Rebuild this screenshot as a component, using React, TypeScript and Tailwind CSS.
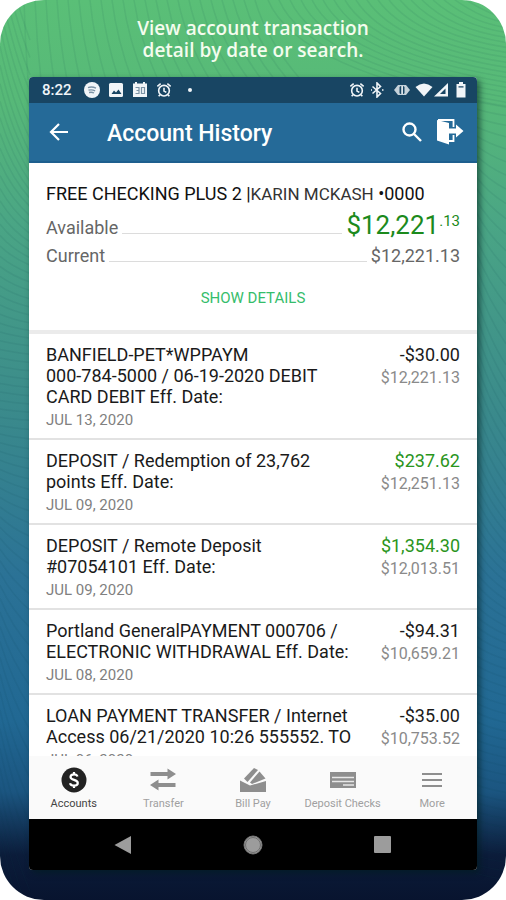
import type { ReactNode } from "react";

type Transaction = {
  lines: string[];
  date: string;
  amount: string;
  balance: string;
  credit?: boolean;
};

const transactions: Transaction[] = [
  {
    lines: ["BANFIELD-PET*WPPAYM", "000-784-5000 / 06-19-2020 DEBIT", "CARD DEBIT Eff. Date:"],
    date: "JUL 13, 2020",
    amount: "-$30.00",
    balance: "$12,221.13",
  },
  {
    lines: ["DEPOSIT / Redemption of 23,762", "points Eff. Date:"],
    date: "JUL 09, 2020",
    amount: "$237.62",
    balance: "$12,251.13",
    credit: true,
  },
  {
    lines: ["DEPOSIT / Remote Deposit", "#07054101 Eff. Date:"],
    date: "JUL 09, 2020",
    amount: "$1,354.30",
    balance: "$12,013.51",
    credit: true,
  },
  {
    lines: ["Portland GeneralPAYMENT 000706 /", "ELECTRONIC WITHDRAWAL Eff. Date:"],
    date: "JUL 08, 2020",
    amount: "-$94.31",
    balance: "$10,659.21",
  },
  {
    lines: ["LOAN PAYMENT TRANSFER / Internet", "Access 06/21/2020 10:26 555552. TO"],
    date: "JUL 06, 2020",
    amount: "-$35.00",
    balance: "$10,753.52",
  },
];

// [y, drop] stops: how far a wave falls while it crosses the side margin
const leftStops = [[-80, 120], [60, 90], [160, 45], [250, 18], [340, 5], [420, 3], [500, 14], [580, 40], [700, 90], [900, 120]];
const rightStops = [[70, 3], [120, 8], [200, 35], [300, 70], [440, 60], [560, 30], [640, 14], [760, 8], [900, 6]];

function dropAt(stops: number[][], y: number) {
  for (let i = 1; i < stops.length; i++) {
    const [y0, d0] = stops[i - 1];
    const [y1, d1] = stops[i];
    if (y <= y1) return d0 + ((d1 - d0) * (y - y0)) / (y1 - y0);
  }
  return stops[stops.length - 1][1];
}

function sideWaves(stops: number[][], x: number, from: number) {
  const paths: string[] = [];
  let y = from;
  while (y < 880) {
    const d = dropAt(stops, y);
    paths.push(`M${x} ${y}Q${x + 12} ${y + d * 0.6} ${x + 30} ${y + d}`);
    y += 8 + d * 0.12;
  }
  return paths.join("");
}

function topWaves() {
  const paths: string[] = [];
  for (let i = 0; i < 22; i++) {
    const x = 24 + i * 11;
    paths.push(`M${x} 0Q${x + 1 + i / 2} 40 ${x + 4 + i * 2} 80`);
  }
  for (let i = 0; i < 22; i++) {
    const x = 268 + i * 11;
    paths.push(`M${x} 0Q${x + 30} ${72 - i * 3} 510 ${108 - i * 5}`);
  }
  return paths.join("");
}

function Waves() {
  return (
    <svg
      aria-hidden="true"
      viewBox="0 0 506 900"
      preserveAspectRatio="none"
      className="absolute inset-0 h-full w-full"
      fill="none"
      stroke="#0b3a4a"
      strokeOpacity="0.08"
      strokeWidth="1.5"
    >
      <path d={sideWaves(leftStops, 0, -80)} />
      <path d={sideWaves(rightStops, 476, 100)} />
      <path d={topWaves()} />
    </svg>
  );
}

function AlarmIcon() {
  return (
    <svg viewBox="0 0 24 24" className="h-4 w-4" fill="none" stroke="currentColor" strokeWidth="2.4">
      <circle cx="12" cy="13" r="8" />
      <path d="M12 8.500v5l3.500 2M2 6.500l5-4M22 6.500l-5-4M6 19l-2 2.500M18 19l2 2.500" />
    </svg>
  );
}

function StatusBar() {
  return (
    <div className="flex h-[26px] shrink-0 items-center justify-between bg-[#184563] pr-2 pl-[13px] text-[#f1f5f8]">
      <div className="flex items-center gap-2">
        <span className="mr-1 text-[15px] leading-5 font-medium">8:22</span>
        <svg viewBox="0 0 16 16" className="h-4 w-4">
          <circle cx="8" cy="8" r="8" fill="currentColor" />
          <path d="M4 5.600q4-1.400 8 .6M4.500 8.200q3.500-1 6.600.6M5 10.500q3-.7 5 .5" fill="none" stroke="#7c93a5" strokeWidth="1.300" />
        </svg>
        <svg viewBox="0 0 16 16" className="h-4 w-4">
          <rect x="1" y="1" width="14" height="14" rx="1.500" fill="currentColor" />
          <path d="M3.500 12l2.500-3.500 2 2 2.500-3 3 4.500z" fill="#184563" />
        </svg>
        <svg viewBox="0 0 16 16" className="h-4 w-4">
          <path d="M1 1.500h2V0h2v1.500h6V0h2v1.500h2V15H1z" fill="currentColor" />
          <path d="M3.500 5.500h3.500v6H3.500M4.500 8.500h2.500M9.500 5.500h3v6h-3z" fill="none" stroke="#7c93a5" strokeWidth="1.200" />
        </svg>
        <AlarmIcon />
        <span className="ml-2 h-1 w-1 rounded-full bg-current" />
      </div>
      <div className="flex items-center gap-1">
        <AlarmIcon />
        <svg viewBox="0 0 16 16" className="mr-1 h-4 w-4" fill="none" stroke="currentColor" strokeWidth="1.600">
          <path d="M3.500 4.500l8 7L8 15V1l3.500 3.500-8 7M2 8h1M13 8h1.500" />
        </svg>
        <svg viewBox="0 0 18 16" className="h-4 w-[18px]">
          <path d="M5 3h8l4 5-4 5H5L1 8z" fill="currentColor" opacity=".8" />
          <rect x="6.500" y="4" width="5" height="8" rx="1.500" fill="#184563" />
          <rect x="8.300" y="4" width="1.600" height="8" fill="currentColor" />
        </svg>
        <div className="flex items-center">
          <svg viewBox="0 0 18 16" className="h-4 w-[18px]">
            <path d="M.5 5Q9-2 17.500 5L9 14.500z" fill="currentColor" />
          </svg>
          <svg viewBox="0 0 16 16" className="h-4 w-4">
            <path d="M15 1v13.500H1z" fill="currentColor" />
            <path d="M12.500 6.500v5.500H7z" fill="#184563" />
          </svg>
        </div>
        <svg viewBox="0 0 16 16" className="h-4 w-4">
          <path d="M6 0h4v2h2.500v13.500h-9V2H6z" fill="currentColor" />
          <path d="M5.500 4.200h5V5.500h-5z" fill="#184563" />
        </svg>
      </div>
    </div>
  );
}

function AppBar() {
  return (
    <header className="flex h-[60px] shrink-0 items-center border-b-2 border-[#1d5f8e] bg-[#256a98] pr-[13px] pl-[18px] text-white">
      <button type="button" aria-label="Back">
        <svg viewBox="0 0 24 24" className="h-6 w-6" fill="none" stroke="currentColor" strokeWidth="2.200">
          <path d="M21 12H4.500M12 4l-8 8 8 8" />
        </svg>
      </button>
      <h1 className="ml-9 flex-1 pt-1 text-[23px] leading-8 font-medium">Account History</h1>
      <button type="button" aria-label="Search">
        <svg viewBox="0 0 24 24" className="h-6 w-6" fill="none" stroke="currentColor" strokeWidth="2.400">
          <circle cx="9.500" cy="9.500" r="6" />
          <path d="M14 14l7 7" />
        </svg>
      </button>
      <button type="button" aria-label="Log out" className="ml-3">
        <svg viewBox="0 0 28 28" className="h-7 w-7">
          <path d="M1 2l12 3v21.500L1 22.500z" fill="currentColor" />
          <path d="M2 2h15.500v7M17.500 17v6H13" fill="none" stroke="currentColor" strokeWidth="1.800" />
          <path d="M13 10.500h7V6.500l7.500 6.500-7.500 6.500v-4h-7z" fill="currentColor" />
          <path d="M13 9.500h4M13 16.500h4" stroke="#256a98" strokeWidth="1.200" />
        </svg>
      </button>
    </header>
  );
}

function BalanceRow({ label, children }: { label: string; children: ReactNode }) {
  return (
    <div className="flex items-baseline gap-1 text-lg leading-7 text-[#666]">
      <dt>{label}</dt>
      <span className="flex-1 border-b border-[#dcdcdc]" />
      <dd>{children}</dd>
    </div>
  );
}

function AccountSummary() {
  return (
    <section className="shrink-0 border-b-4 border-[#ebebeb] px-[17px] pt-5 pb-5">
      <h2 className="text-lg leading-[22px] whitespace-nowrap text-[#111]">
        FREE CHECKING PLUS 2 |<span className="text-[17px] text-[#333]">KARIN MCKASH</span> •0000
      </h2>
      <dl className="mt-[6px]">
        <BalanceRow label="Available">
          <span className="flex items-start text-[26px] text-[#1c8a1c]">
            $12,221<span className="text-[15px] leading-5">.13</span>
          </span>
        </BalanceRow>
        <BalanceRow label="Current">$12,221.13</BalanceRow>
      </dl>
      <div className="mt-4 flex justify-center">
        <button type="button" className="text-[15px] leading-6 text-[#35bd6b]">
          SHOW DETAILS
        </button>
      </div>
    </section>
  );
}

function TransactionRow({ item }: { item: Transaction }) {
  return (
    <li className="flex justify-between border-b-2 border-[#e2e2e2] px-[17px] pt-[10px] pb-2">
      <div className="whitespace-nowrap">
        {item.lines.map((line) => (
          <p key={line} className="text-lg leading-[21px] text-[#1a1a1a]">
            {line}
          </p>
        ))}
        <p className="mt-[3px] text-[15px] leading-5 text-[#808080]">{item.date}</p>
      </div>
      <div className="text-right">
        <p className={item.credit ? "text-lg leading-[21px] text-[#2a951c]" : "text-lg leading-[21px] text-[#1a1a1a]"}>
          {item.amount}
        </p>
        <p className="mt-[3px] text-base leading-5 text-[#8a8a8a]">{item.balance}</p>
      </div>
    </li>
  );
}

function Tab({ label, active, children }: { label: string; active?: boolean; children: ReactNode }) {
  return (
    <button
      type="button"
      className={
        active
          ? "flex flex-col items-center gap-1 pt-[10px] text-[#222]"
          : "flex flex-col items-center gap-1 pt-[10px] text-[#8e8e8e]"
      }
    >
      <svg viewBox="0 0 28 28" className="h-7 w-7">
        {children}
      </svg>
      <span className={active ? "text-[11px] leading-3 whitespace-nowrap text-[#444]" : "text-[11px] leading-3 whitespace-nowrap text-[#a0a0a0]"}>
        {label}
      </span>
    </button>
  );
}

function TabBar() {
  return (
    <nav className="grid h-[63px] shrink-0 grid-cols-5 bg-[#fafafa]">
      <Tab label="Accounts" active>
        <circle cx="14" cy="14" r="12.500" fill="currentColor" />
        <path d="M17.500 10.500c-.5-1.500-1.800-2.200-3.500-2.200-2 0-3.500 1-3.500 2.700 0 3.800 7.300 2 7.300 6 0 1.700-1.600 2.700-3.800 2.700-2 0-3.500-.8-4-2.500M14 6v2.500M14 19.500V22" fill="none" stroke="#fff" strokeWidth="2.200" />
      </Tab>
      <Tab label="Transfer">
        <path d="M1.500 6h17V2.500l8.500 5.500-8.500 5.500V10h-17zM26.500 17h-17V13.500L1 19l8.500 5.500V21h17z" fill="currentColor" />
      </Tab>
      <Tab label="Bill Pay">
        <path d="M1 14.500l10 5 16-4.500v11H1z" fill="currentColor" />
        <path d="M5 12.500L15 2l4 2L8.500 16z" fill="currentColor" />
        <path d="M11 16.500L20.500 5.500l6 7L13 18z" fill="currentColor" />
      </Tab>
      <Tab label="Deposit Checks">
        <path d="M1 6h26v16H1z" fill="currentColor" />
        <path d="M3 11.500h22M3 15.500h22M14 19h11" stroke="#e8e8e8" strokeWidth="1.500" />
      </Tab>
      <Tab label="More">
        <path d="M4 8h20M4 14h20M4 20h20" stroke="currentColor" strokeWidth="2" />
      </Tab>
    </nav>
  );
}

function SystemNav() {
  return (
    <div className="flex h-[51px] shrink-0 items-center justify-between bg-black px-[84px] text-[#9c9c9c]">
      <button type="button" aria-label="System back">
        <svg viewBox="0 0 20 20" className="h-5 w-5">
          <path d="M18 1v18L1.500 10z" fill="currentColor" />
        </svg>
      </button>
      <button type="button" aria-label="Home">
        <svg viewBox="0 0 20 20" className="h-5 w-5">
          <circle cx="10" cy="10" r="9" fill="currentColor" stroke="#777" />
          <circle cx="10" cy="10" r="7.500" fill="none" stroke="#6e6e6e" />
        </svg>
      </button>
      <button type="button" aria-label="Recent apps">
        <svg viewBox="0 0 20 20" className="h-5 w-5">
          <rect x="1" y="1" width="17" height="17" rx="1" fill="currentColor" />
        </svg>
      </button>
    </div>
  );
}

export default function App() {
  return (
    <main className="h-screen bg-white font-['Roboto',sans-serif]">
      <div className="relative flex h-full flex-col overflow-hidden rounded-[44px] bg-[linear-gradient(180deg,#5abf77_0%,#57b978_11%,#4aa585_25%,#3b8b8b_45%,#2b7296_64%,#216893_80%,#1b5580_88%,#0b1c3a_95%,#08142f_100%)]">
        <Waves />
        <p className="relative pt-[17px] text-center font-['Open_Sans',sans-serif] text-[19px] leading-[22px] font-semibold text-[#f4fcee]">
          View account transaction
          <br />
          detail by date or search.
        </p>
        <div className="relative mx-[29px] mt-4 mb-[30px] flex min-h-0 flex-1 flex-col overflow-hidden rounded-[4px] bg-white shadow-[3px_3px_6px_rgba(0,30,30,0.6)]">
          <StatusBar />
          <AppBar />
          <div className="flex min-h-0 flex-1 flex-col overflow-hidden">
            <AccountSummary />
            <ul>
              {transactions.map((item) => (
                <TransactionRow key={item.balance} item={item} />
              ))}
            </ul>
          </div>
          <TabBar />
          <SystemNav />
        </div>
      </div>
    </main>
  );
}
